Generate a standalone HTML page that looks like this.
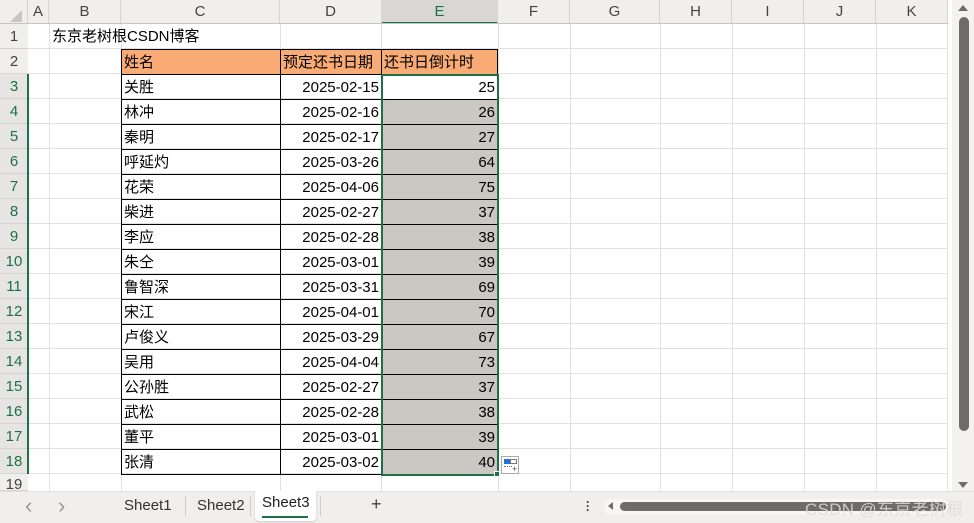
<!DOCTYPE html>
<html><head><meta charset="utf-8"><style>
*{margin:0;padding:0;box-sizing:border-box}
body{width:974px;height:523px;overflow:hidden;background:#fff;font-family:"Liberation Sans","Noto Sans CJK SC",sans-serif;position:relative}
.a{position:absolute}
.grid{left:28px;top:24px;width:920px;height:467px;
background-image:repeating-linear-gradient(to bottom,transparent 0,transparent 24px,#e1e1e1 24px,#e1e1e1 25px);}
.vl{position:absolute;top:24px;width:1px;height:467px;background:#e1e1e1}
.ch{position:absolute;top:0;height:24px;line-height:24px;text-align:center;font-size:15px;color:#444;border-right:1px solid #d6d4d2;background:#f0efee}
.rh{position:absolute;left:0;width:28px;height:25px;line-height:25px;text-align:center;font-size:15px;color:#444;background:#f0efee;border-bottom:1px solid #d6d4d2}
.g{color:#1e7145;background:#e6e5e3}
.c{position:absolute;height:26px;line-height:25px;font-size:15px;color:#000;border:1px solid #000;padding:0 2px;white-space:nowrap}
.r{text-align:right}
</style></head><body>
<div class="a grid"></div>
<div class="vl" style="left:49px"></div><div class="vl" style="left:121px"></div><div class="vl" style="left:280px"></div><div class="vl" style="left:381px"></div><div class="vl" style="left:498px"></div><div class="vl" style="left:570px"></div><div class="vl" style="left:660px"></div><div class="vl" style="left:732px"></div><div class="vl" style="left:804px"></div><div class="vl" style="left:876px"></div><div class="vl" style="left:947px"></div>
<div class="ch" style="left:0;width:28px"></div>
<div class="a" style="left:10px;top:10px;width:0;height:0;border-left:12px solid transparent;border-bottom:12px solid #c8c6c4"></div>
<div class="ch" style="left:28px;width:21px">A</div>
<div class="ch" style="left:49px;width:72px">B</div>
<div class="ch" style="left:121px;width:159px">C</div>
<div class="ch" style="left:280px;width:102px">D</div>
<div class="ch" style="left:382px;width:116px;background:#d9d7d4;color:#1e7145;border-bottom:2px solid #1e7145">E</div>
<div class="ch" style="left:498px;width:72px">F</div>
<div class="ch" style="left:570px;width:90px">G</div>
<div class="ch" style="left:660px;width:72px">H</div>
<div class="ch" style="left:732px;width:72px">I</div>
<div class="ch" style="left:804px;width:72px">J</div>
<div class="ch" style="left:876px;width:72px">K</div>
<div class="a" style="left:0;top:23px;width:948px;height:1px;background:#c8c6c4"></div>
<div class="rh" style="top:24px">1</div><div class="rh" style="top:49px">2</div>
<div class="rh g" style="top:74px">3</div><div class="rh g" style="top:99px">4</div><div class="rh g" style="top:124px">5</div><div class="rh g" style="top:149px">6</div><div class="rh g" style="top:174px">7</div><div class="rh g" style="top:199px">8</div><div class="rh g" style="top:224px">9</div><div class="rh g" style="top:249px">10</div><div class="rh g" style="top:274px">11</div><div class="rh g" style="top:299px">12</div><div class="rh g" style="top:324px">13</div><div class="rh g" style="top:349px">14</div><div class="rh g" style="top:374px">15</div><div class="rh g" style="top:399px">16</div><div class="rh g" style="top:424px">17</div><div class="rh g" style="top:449px">18</div>
<div class="rh" style="top:474px;height:17px;line-height:22px;overflow:hidden">19</div>
<div class="a" style="left:27px;top:74px;width:2px;height:400px;background:#1e7145"></div>
<div class="a" style="left:52px;top:25px;height:24px;line-height:24px;font-size:15px">东京老树根CSDN博客</div>
<div class="c" style="left:121px;top:49px;width:160px;background:#f9ab76">姓名</div>
<div class="c" style="left:280px;top:49px;width:102px;background:#f9ab76">预定还书日期</div>
<div class="c" style="left:381px;top:49px;width:117px;background:#f9ab76">还书日倒计时</div>
<div id="rows"></div>
<script>
var d=[["关胜","2025-02-15",25],["林冲","2025-02-16",26],["秦明","2025-02-17",27],["呼延灼","2025-03-26",64],["花荣","2025-04-06",75],["柴进","2025-02-27",37],["李应","2025-02-28",38],["朱仝","2025-03-01",39],["鲁智深","2025-03-31",69],["宋江","2025-04-01",70],["卢俊义","2025-03-29",67],["吴用","2025-04-04",73],["公孙胜","2025-02-27",37],["武松","2025-02-28",38],["董平","2025-03-01",39],["张清","2025-03-02",40]];
var h="";d.forEach(function(r,i){var y=74+i*25;h+='<div class="c" style="left:121px;top:'+y+'px;width:160px">'+r[0]+'</div><div class="c r" style="left:280px;top:'+y+'px;width:102px">'+r[1]+'</div><div class="c r" style="left:381px;top:'+y+'px;width:117px;background:'+(i?'#cbc8c4':'#fff')+'">'+r[2]+'</div>';});
document.getElementById("rows").innerHTML=h;
</script>
<div class="a" style="left:381px;top:74px;width:118px;height:402px;border:2px solid #1e7145"></div>
<div class="a" style="left:494px;top:471px;width:6px;height:6px;background:#1e7145;border:1px solid #fff"></div>
<div class="a" style="left:501px;top:456px;width:18px;height:18px;border:1px solid #aaa;background:#fff">
<div class="a" style="left:2px;top:2px;width:6px;height:5px;background:#2b6fd6"></div><div class="a" style="left:8px;top:2px;width:7px;height:5px;border:1px solid #777"></div><div class="a" style="left:2px;top:9px;width:8px;border-top:1px dotted #777"></div><div class="a" style="left:10px;top:8px;font-size:9px;line-height:9px;color:#555">+</div></div>
<div class="a" style="left:952px;top:0;width:22px;height:491px;background:#f3f2f1"></div>
<div class="a" style="left:958px;top:5px;width:0;height:0;border-left:5px solid transparent;border-right:5px solid transparent;border-bottom:6px solid #6e6c68"></div>
<div class="a" style="left:959px;top:17px;width:10px;height:414px;background:#6e6c68;border-radius:5px"></div>
<div class="a" style="left:958px;top:482px;width:0;height:0;border-left:5px solid transparent;border-right:5px solid transparent;border-top:6px solid #6e6c68"></div>
<div class="a" style="left:0;top:491px;width:974px;height:32px;background:#f0efee;border-top:1px solid #e1e1e1"></div>
<div class="a" style="left:25px;top:493px;font-size:22px;color:#999">&lsaquo;</div>
<div class="a" style="left:58px;top:493px;font-size:22px;color:#999">&rsaquo;</div>
<div class="a" style="left:124px;top:497px;font-size:15px;color:#333">Sheet1</div>
<div class="a" style="left:185px;top:496px;width:1px;height:20px;background:#ccc"></div>
<div class="a" style="left:197px;top:497px;font-size:15px;color:#333">Sheet2</div>
<div class="a" style="left:250px;top:496px;width:1px;height:20px;background:#ccc"></div>
<div class="a" style="left:255px;top:491px;width:61px;height:30px;background:#fff;border-radius:0 0 4px 4px;box-shadow:0 1px 2px #ccc"></div>
<div class="a" style="left:262px;top:494px;font-size:15px;color:#222">Sheet3</div>
<div class="a" style="left:262px;top:516px;width:46px;height:2px;background:#1e7145"></div>
<div class="a" style="left:320px;top:496px;width:1px;height:20px;background:#ccc"></div>
<div class="a" style="left:371px;top:494px;font-size:18px;color:#444">+</div>
<div class="a" style="left:586px;top:500px;font-size:12px;font-weight:bold;color:#333;line-height:4px">·<br>·<br>·</div>
<div class="a" style="left:604px;top:499px;width:344px;height:15px;background:#f8f7f6;border-radius:7px"></div>
<div class="a" style="left:608px;top:502px;width:0;height:0;border-top:4px solid transparent;border-bottom:4px solid transparent;border-right:5px solid #6e6c68"></div>
<div class="a" style="left:620px;top:502px;width:326px;height:9px;background:#6e6c68;border-radius:5px"></div>
<div class="a" style="left:805px;top:495px;font-size:17px;color:rgba(220,220,220,0.85);letter-spacing:0.3px">CSDN @东京老树根</div>
</body></html>
